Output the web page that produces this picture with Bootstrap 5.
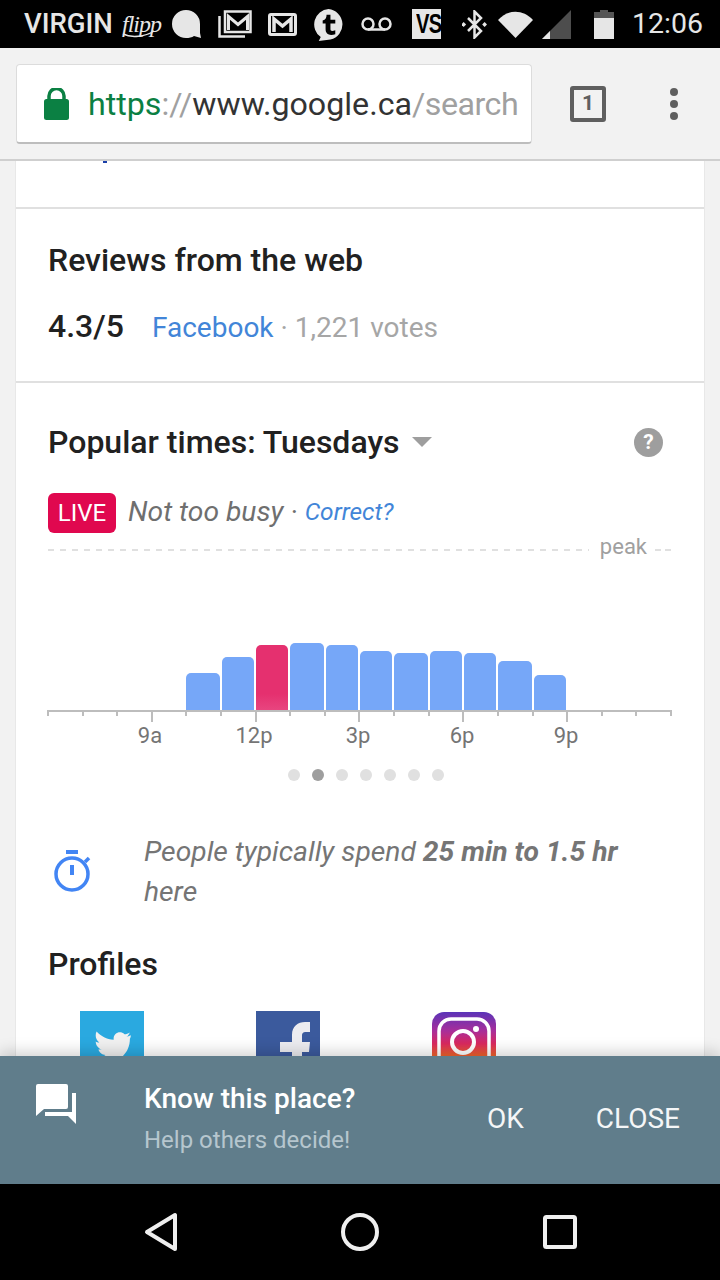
<!DOCTYPE html>
<html lang="en">
<head>
<meta charset="utf-8">
<title>Popular times</title>
<link href="https://cdn.jsdelivr.net/npm/bootstrap@5.3.0/dist/css/bootstrap.min.css" rel="stylesheet">
<style>
html,body{height:100%;}
body{width:720px;height:1280px;overflow:hidden;background:#f2f2f2;font-family:Roboto,"Liberation Sans",sans-serif;color:#212121;}
.phone{width:720px;height:1280px;}
.statusbar{height:48px;background:#000;color:#e6e6e6;padding-left:24px;flex:none;}
.carrier{font-size:27.500px;font-weight:500;line-height:50px;color:#e6e6e6;width:89px;white-space:nowrap;}
.flippmark{font-family:"Liberation Serif",serif;font-style:italic;font-size:24px;line-height:44px;margin-left:9px;width:33px;display:inline-block;letter-spacing:-1px;position:relative;}
.flippmark svg{position:absolute;left:0;top:28px;}
.gap9{margin-left:9px}.gap11{margin-left:11px}.gap15{margin-left:15px}.gap16{margin-left:16px}.gap17{margin-left:17px}.gap20{margin-left:20px}.gap21{margin-left:21px}.gap23{margin-left:23px}
.vsmark{width:29px;height:30px;background:#e6e6e6;color:#000;font-family:"Liberation Sans",sans-serif;font-weight:700;font-size:28px;line-height:30px;text-align:center;flex:none;overflow:hidden;}
.vsmark span{display:block;transform:scaleX(.72);letter-spacing:-1px;}
.clock{font-size:28.500px;line-height:50px;margin-left:18px;white-space:nowrap;}
.toolbar{height:113px;background:#f2f2f2;border-bottom:2px solid #cfcfcf;flex:none;padding:16px 0 0 16px;}
.urlbox{width:516px;height:80px;background:#fff;border:1px solid #dcdcdc;border-bottom:2px solid #bdbdbd;border-radius:4px;padding-left:27px;overflow:hidden;}
.urltext{font-size:32.200px;white-space:nowrap;margin-left:19px;color:#a0a0a0;line-height:78px;}
.urltext .sec{color:#0b8043;}
.urltext .host{color:#333;}
.urltext .urltail{letter-spacing:-.5px;}
.tabcount{width:36px;height:36px;border:4px solid #5f5f5f;border-radius:3px;margin-left:38px;margin-top:22px;font-size:21px;font-weight:700;line-height:27px;text-align:center;color:#5f5f5f;}
.dots{margin-left:62px;margin-top:24px;}
.content{flex:1 1 auto;overflow:hidden;min-height:0;}
.sheet{margin:0 15px;width:690px;background:#fff;border-left:1px solid #e8e8e8;border-right:1px solid #e8e8e8;}
.sec-top{height:48px;border-bottom:2px solid #e0e0e0;}
.cutmark{width:4px;height:2px;background:#1a3fa8;margin-left:87px;}
.sec-reviews{height:174px;border-bottom:2px solid #e0e0e0;padding:32px 32px 0;}
.heading{font-size:32px;font-weight:500;line-height:38px;color:#212121;margin:0;}
.scoreline{margin-top:28px;line-height:38px;font-size:28px;color:#a6a6a6;}
.score{font-size:32px;font-weight:500;color:#212121;margin-right:28px;}
.bluelink{color:#4285d8;text-decoration:none;}
.sec-popular{padding:40px 33px 0 32px;}
.help{width:29px;height:29px;border-radius:50%;background:#9e9e9e;color:#fff;font-size:21px;font-weight:700;line-height:29px;text-align:center;margin-right:8px;}
.caret{width:0;height:0;border-left:10px solid transparent;border-right:10px solid transparent;border-top:10px solid #9e9e9e;margin-left:12px;}
.liveline{margin-top:31px;height:40px;}
.livetag{width:68px;height:40px;background:#e0084f;border-radius:6px;color:#fff;font-size:24px;line-height:40px;text-align:center;margin-right:12px;margin-top:2px;}
.busy{font-size:28.250px;font-style:italic;color:#6f6f6f;}
.correct{font-size:24.500px;font-style:italic;color:#4285d8;text-decoration:none;}
.peakline{height:22px;margin-top:4px;}
.dashfill{flex:1 1 auto;height:2px;margin-top:13px;background:repeating-linear-gradient(90deg,#e0e0e0 0 6px,transparent 6px 12px);}
.peakword{font-size:22px;color:#a0a0a0;line-height:22px;padding:0 8px 0 11px;}
.dashend{width:16px;height:2px;margin-top:13px;background:repeating-linear-gradient(90deg,#e0e0e0 0 6px,transparent 6px 10px);}
.chartbox{margin-left:-1px;width:625px;}
.plot{height:152px;padding-left:139px;gap:2px;}
.onebar{background:#76a7f8;border-radius:5px 5px 0 0;width:32px;}
.onebar.widebar{width:34px;}
.onebar.now{background:linear-gradient(#e5306f 75%,#e8457f);}
.axis{height:2px;background:#bdbdbd;}
.ticks{height:8px;}
.tick{width:2px;height:4px;background:#bdbdbd;}
.tick.big{height:10px;}
.hours{padding-left:50px;height:32px;}
.hourlabel{width:104px;text-align:center;font-size:22px;line-height:32px;color:#757575;}
.pager{margin-top:17px;gap:12px;padding-left:12px;}
.pdot{width:12px;height:12px;border-radius:50%;background:#e0e0e0;}
.pdot.on{background:#9e9e9e;}
.spend{margin-top:51px;}
.spendicon{width:96px;flex:none;padding-left:6px;padding-top:17px;}
.spendtext{font-size:28.250px;font-style:italic;line-height:40px;color:#757575;margin:0;width:510px;}
.profiles{margin-top:33px;}
.profilerow{margin-top:28px;height:80px;padding-left:32px;}
.pfitem{width:176px;}
.banner{height:128px;background:#607d8b;flex:none;box-shadow:0 -4px 14px rgba(0,0,0,.18);position:relative;color:#fff;}
.bannericon{width:144px;padding-left:36px;padding-top:28px;flex:none;}
.bannertitle{font-size:28px;font-weight:500;line-height:36px;margin-top:25px;}
.bannersub{font-size:24px;color:#b6c6ce;line-height:36px;margin-top:5px;}
.bannerbtn{font-size:28px;line-height:36px;margin-top:45px;color:#f4f6f7;}
.closebtn{margin-left:72px;margin-right:40px;}
.navbarea{height:96px;background:#000;flex:none;}
.navback{margin-left:143px;}
.navhome{margin-left:161px;}
.navsquare{margin-left:163px;}
</style>
</head>
<body>
<div class="phone d-flex flex-column">
  <div class="statusbar d-flex align-items-center">
    <span class="carrier">VIRGIN</span>
    <span class="flippmark">flipp<svg width="34" height="8" viewBox="0 0 34 8" fill="none" stroke="#e6e6e6" stroke-width="1.500"><path d="M1 4c8 4 22 3 31-3"/></svg></span>
    <svg class="gap17" width="29" height="28" viewBox="0 0 29 28"><path d="M14 0A14 14 0 0 0 14 28c3 0 6-.500 8-2l7 2-1-5V14A14 14 0 0 0 14 0z" fill="#e6e6e6"/></svg>
    <svg class="gap17" width="34" height="28" viewBox="0 0 34 28" fill="none" stroke="#e6e6e6"><path d="M1.500 6v20.500H27" stroke-width="2.500"/><rect x="7" y="1.500" width="25.500" height="20.500" stroke-width="2.500"/><path d="M10.500 20V6.500l9.500 8 9.500-8V20" stroke-width="3"/></svg>
    <svg class="gap16" width="29" height="23" viewBox="0 0 29 23" fill="none" stroke="#e6e6e6"><rect x="1.500" y="1.500" width="26" height="20" rx="1.500" stroke-width="3"/><path d="M6 19V6l8.500 7L23 6v13" stroke-width="3.500"/></svg>
    <svg class="gap15" width="33" height="33" viewBox="0 0 34 34"><path d="M17 1a16 16 0 0 1 2 31.500L7 34l2-4A16 16 0 0 1 17 1z" fill="#e6e6e6"/><path d="M15 7h4v5h5v4h-5v6c0 2 2 2 5 1v4c-6 2-10 0-10-5v-6h-3v-3c3-1 4-3 4-6z" fill="#000"/></svg>
    <svg class="gap16" width="31" height="14" viewBox="0 0 31 14" fill="none" stroke="#e6e6e6" stroke-width="2.500"><circle cx="7" cy="7" r="5.500"/><circle cx="24" cy="7" r="5.500"/><path d="M7 12.500h17"/></svg>
    <span class="vsmark gap20"><span>VS</span></span>
    <svg class="gap21" width="25" height="29" viewBox="0 0 25 29" fill="none" stroke="#e6e6e6" stroke-width="2.500"><path d="M6 8l13 13-6.500 6.500v-26L19 8 6 21"/><rect x="0" y="13" width="3.500" height="3.500" fill="#e6e6e6" stroke="none" transform="rotate(45 2 14.500)"/><rect x="21" y="13" width="3.500" height="3.500" fill="#e6e6e6" stroke="none" transform="rotate(45 23 14.500)"/></svg>
    <svg class="gap11" width="35" height="27" viewBox="0 0 35 27"><path d="M0 9C10-2 25-2 35 9L17.500 27z" fill="#e6e6e6"/></svg>
    <svg class="gap9" width="29" height="29" viewBox="0 0 29 29"><path d="M29 0v29H0z" fill="#4d4d4d"/><path d="M8 21v8H0z" fill="#e6e6e6"/></svg>
    <svg class="gap23" width="20" height="29" viewBox="0 0 20 29"><path d="M6 0h8v2h6v6H0V2h6z" fill="#555"/><rect y="8" width="20" height="21" fill="#e6e6e6"/></svg>
    <span class="clock">12:06</span>
  </div>

  <div class="toolbar d-flex">
    <div class="urlbox d-flex align-items-center">
      <svg width="25" height="32" viewBox="0 0 25 32"><path d="M5 13V8a7.500 7.500 0 0 1 15 0v5" fill="none" stroke="#0b8043" stroke-width="3.500"/><rect y="11" width="25" height="21" rx="2.500" fill="#0b8043"/></svg>
      <div class="urltext"><span class="sec">https</span>://<span class="host">www.google.ca</span><span class="urltail">/search</span></div>
    </div>
    <div class="tabcount">1</div>
    <svg class="dots" width="12" height="32" viewBox="0 0 12 32"><circle cx="6" cy="4" r="4" fill="#5f5f5f"/><circle cx="6" cy="16" r="4" fill="#5f5f5f"/><circle cx="6" cy="28" r="4" fill="#5f5f5f"/></svg>
  </div>

  <div class="content">
    <div class="sheet">
      <div class="sec-top"><div class="cutmark"></div></div>
      <div class="sec-reviews">
        <h2 class="heading">Reviews from the web</h2>
        <div class="scoreline"><span class="score">4.3/5</span><a class="bluelink" href="#">Facebook</a> · 1,221 votes</div>
      </div>
      <div class="sec-popular">
        <div class="d-flex align-items-center">
          <h2 class="heading">Popular times: Tuesdays</h2>
          <span class="caret"></span>
          <span class="help ms-auto">?</span>
        </div>
        <div class="liveline d-flex align-items-center">
          <span class="livetag">LIVE</span>
          <span class="busy">Not too busy</span><span class="busy">&nbsp;·&nbsp;</span><a class="correct" href="#">Correct?</a>
        </div>
        <div class="peakline d-flex"><span class="dashfill"></span><span class="peakword">peak</span><span class="dashend"></span></div>
        <div class="chartbox">
          <div class="plot d-flex align-items-end">
            <div class="onebar widebar" style="height:37px"></div>
            <div class="onebar" style="height:53px"></div>
            <div class="onebar now" style="height:65px"></div>
            <div class="onebar widebar" style="height:67px"></div>
            <div class="onebar" style="height:65px"></div>
            <div class="onebar" style="height:59px"></div>
            <div class="onebar widebar" style="height:57px"></div>
            <div class="onebar" style="height:59px"></div>
            <div class="onebar" style="height:57px"></div>
            <div class="onebar widebar" style="height:49px"></div>
            <div class="onebar" style="height:35px"></div>
          </div>
          <div class="axis"></div>
          <div class="ticks d-flex justify-content-between">
            <i class="tick"></i><i class="tick"></i><i class="tick"></i><i class="tick big"></i><i class="tick"></i><i class="tick"></i><i class="tick big"></i><i class="tick"></i><i class="tick"></i><i class="tick big"></i><i class="tick"></i><i class="tick"></i><i class="tick big"></i><i class="tick"></i><i class="tick"></i><i class="tick big"></i><i class="tick"></i><i class="tick"></i><i class="tick"></i>
          </div>
        </div>
        <div class="hours d-flex">
          <span class="hourlabel">9a</span><span class="hourlabel">12p</span><span class="hourlabel">3p</span><span class="hourlabel">6p</span><span class="hourlabel">9p</span>
        </div>
        <div class="pager d-flex justify-content-center">
          <i class="pdot"></i><i class="pdot on"></i><i class="pdot"></i><i class="pdot"></i><i class="pdot"></i><i class="pdot"></i><i class="pdot"></i>
        </div>
        <div class="spend d-flex">
          <div class="spendicon">
            <svg width="38" height="44" viewBox="0 0 38 44" fill="none" stroke="#4285f4"><path d="M12 3h12" stroke-width="4"/><circle cx="18" cy="25" r="16" stroke-width="3.500"/><path d="M18 16v10" stroke-width="4"/><path d="M31 13l4-4" stroke-width="3.500"/></svg>
          </div>
          <p class="spendtext">People typically spend <b>25 min to 1.5 hr</b> here</p>
        </div>
        <h2 class="heading profiles">Profiles</h2>
        <div class="profilerow d-flex">
          <div class="pfitem"><svg width="64" height="64" viewBox="0 0 64 64"><rect width="64" height="64" fill="#2aa9e0"/><path transform="translate(4 8) scale(.9)" d="M52 18c-2 1-3 1-5 2 2-1 3-3 4-5-2 1-4 2-6 2-5-5-13-1-12 6-8 0-14-4-19-9-2 4-1 9 3 12-2 0-3 0-4-1 0 4 3 8 7 9-1 0-3 0-4 0 1 3 4 6 8 6-4 3-8 4-13 4 18 10 40 0 40-22 1-2 1-3 1-4z" fill="#f1f1f1"/></svg></div>
          <div class="pfitem"><svg width="64" height="64" viewBox="0 0 64 64"><rect width="64" height="64" fill="#3b5a9d"/><path d="M36 64V41H24V31h12v-7c0-9 6-13 13-13h5v10h-4c-3 0-4 1-4 4v6h8l-1 10h-7v23z" fill="#ececf0"/></svg></div>
          <div class="pfitem"><svg width="64" height="64" viewBox="0 0 64 64"><defs><linearGradient id="iggrad" x1="0" y1="0" x2="0" y2="1"><stop offset="0" stop-color="#5b34b8"/><stop offset=".3" stop-color="#a82e9a"/><stop offset=".5" stop-color="#d9285f"/><stop offset=".68" stop-color="#f0602e"/></linearGradient></defs><rect y="1" width="64" height="63" rx="12" fill="url(#iggrad)"/><rect x="7" y="8" width="50" height="50" rx="12" fill="none" stroke="#fff" stroke-width="3.500"/><circle cx="31" cy="31" r="11" fill="none" stroke="#fff" stroke-width="4"/><circle cx="44" cy="18" r="3" fill="#fff"/></svg></div>
        </div>
      </div>
    </div>
  </div>

  <div class="banner d-flex">
    <div class="bannericon">
      <svg width="40" height="40" viewBox="0 0 40 40"><path d="M2 0h28a2 2 0 0 1 2 2v21a2 2 0 0 1-2 2H8l-8 7V2a2 2 0 0 1 2-2z" fill="#fff"/><path d="M36 9h4v31l-8-8H9v-4h27z" fill="#fff"/></svg>
    </div>
    <div class="flex-grow-1">
      <div class="bannertitle">Know this place?</div>
      <div class="bannersub">Help others decide!</div>
    </div>
    <div class="bannerbtn">OK</div>
    <div class="bannerbtn closebtn text-nowrap">CLOSE</div>
  </div>

  <div class="navbarea d-flex align-items-center">
    <svg class="navback" width="36" height="40" viewBox="0 0 36 40"><path d="M32 3v34L4 20z" fill="none" stroke="#efefef" stroke-width="4" stroke-linejoin="round"/></svg>
    <svg class="navhome" width="40" height="40" viewBox="0 0 40 40"><circle cx="20" cy="20" r="17" fill="none" stroke="#efefef" stroke-width="4"/></svg>
    <svg class="navsquare" width="34" height="34" viewBox="0 0 34 34"><rect x="2" y="2" width="30" height="30" rx="1.500" fill="none" stroke="#efefef" stroke-width="4"/></svg>
  </div>
</div>
<script src="https://cdn.jsdelivr.net/npm/bootstrap@5.3.0/dist/js/bootstrap.bundle.min.js"></script>
</body>
</html>
